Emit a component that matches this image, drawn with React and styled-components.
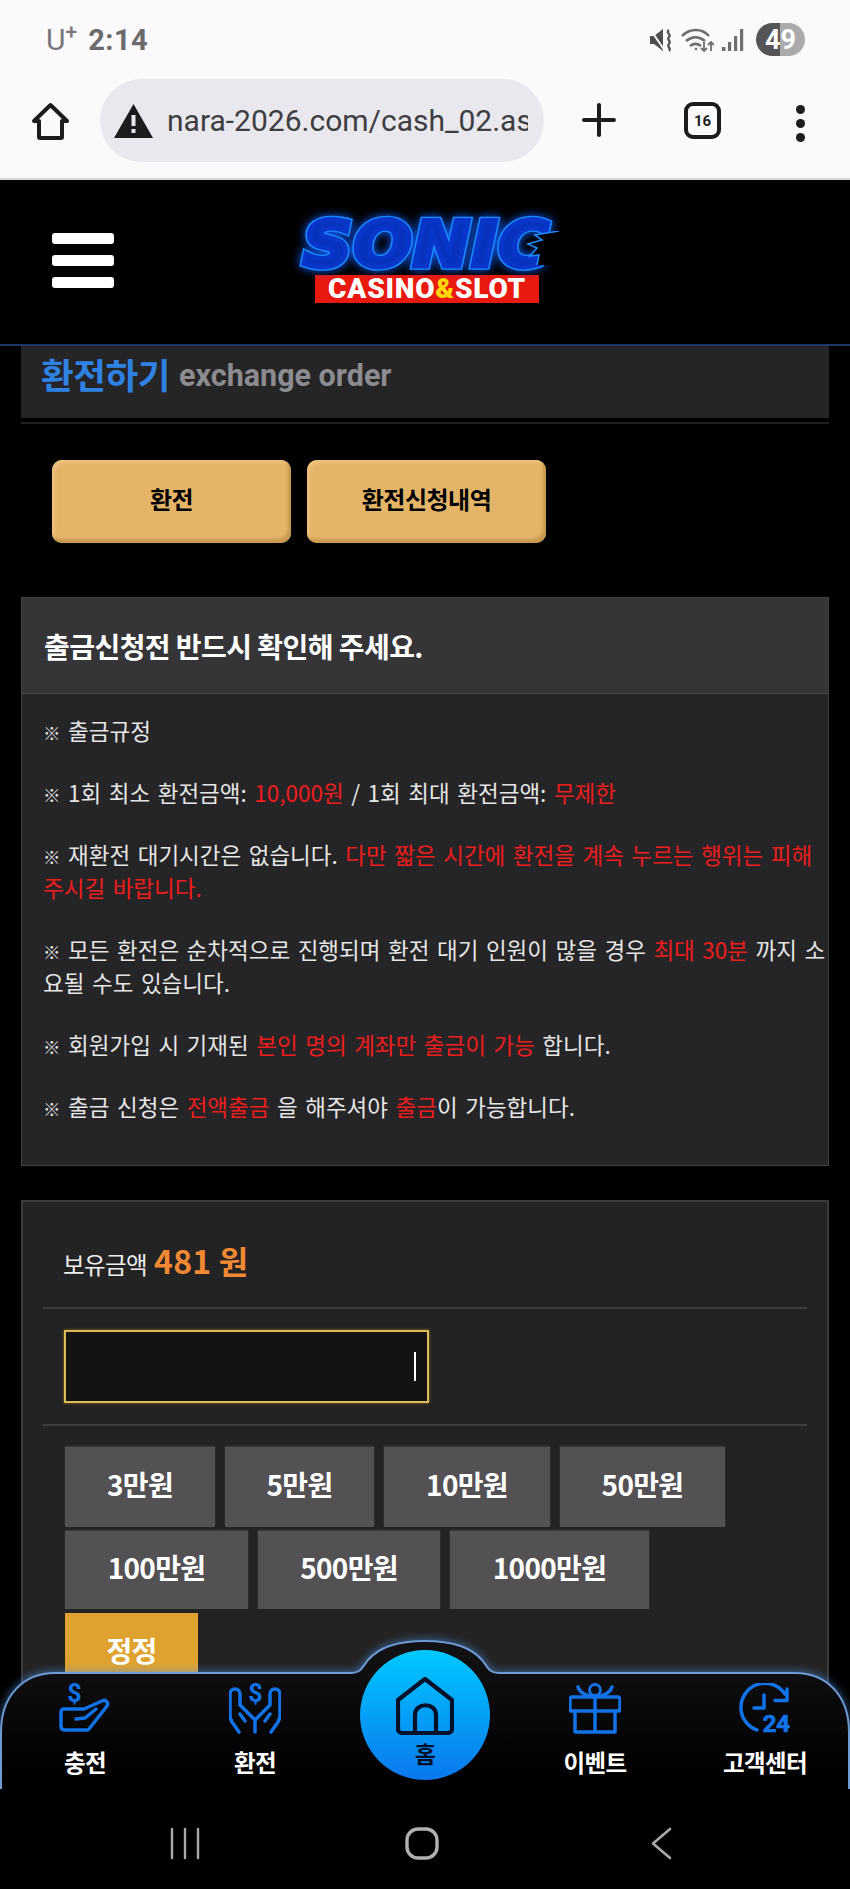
import React from "react";
import styled, { createGlobalStyle } from "styled-components";

const Global = createGlobalStyle`
  html, body { margin: 0; padding: 0; background: #000; }
  * { box-sizing: border-box; }
`;
const KR = `"Noto Sans CJK KR", "Noto Sans", sans-serif`;

const Screen = styled.div`
  width: 850px; height: 1889px; display: flex; flex-direction: column;
  overflow: hidden; background: #000; font-family: ${KR};
`;
const Chrome = styled.div`
  height: 180px; background: #fbf9fc; border-bottom: 2px solid #d8d8da;
  display: flex; flex-direction: column; flex: none;
`;
const StatusBar = styled.div`
  height: 79px; display: flex; align-items: center; justify-content: space-between;
  padding: 0 45px 0 46px; color: #6c6c6e;
`;
const StatusLeft = styled.div`display: flex; align-items: center; gap: 11px;`;
const Carrier = styled.span`
  font: 400 30px "Roboto", sans-serif; color: #77777a; line-height: 1;
  sup { font-size: 21px; font-weight: 500; line-height: 0; vertical-align: 11px; margin-left: 0; }
`;
const Clock = styled.span`font: 700 29px "Roboto", sans-serif; color: #6a6a6c; letter-spacing: .5px;`;
const StatusRight = styled.div`display: flex; align-items: center; gap: 8px;`;
const Battery = styled.div`
  width: 49px; height: 33px; border-radius: 17px; margin-left: 4px;
  background: linear-gradient(90deg, #555557 50%, #ababad 50%);
  display: flex; align-items: center; justify-content: center;
  color: #fff; font: 700 27px "Roboto", sans-serif;
`;
const Toolbar = styled.div`
  height: 99px; display: flex; align-items: flex-start; padding: 0 0 0 32px; color: #1c1c1e;
`;
const ToolIcon = styled.div`
  flex: none; margin-top: ${p => p.$top ?? 23}px; margin-left: ${p => p.$left ?? 0}px;
  display: flex;
`;
const UrlPill = styled.div`
  width: 444px; height: 83px; margin: 0 0 0 31px; border-radius: 42px; background: #e9e8ee;
  display: flex; align-items: center; padding: 0 16px 0 14px; gap: 14px; flex: none;
`;
const UrlText = styled.div`
  font: 400 30px "Roboto", sans-serif; color: #3e3e42; white-space: nowrap; overflow: hidden; flex: 1;
`;
const TabBox = styled.div`
  width: 37px; height: 37px; border: 4px solid #1c1c1e; border-radius: 9px;
  display: flex; align-items: center; justify-content: center;
  font: 700 15px "Roboto", sans-serif; color: #1c1c1e;
`;
const Dots = styled.div`
  display: flex; flex-direction: column; gap: 5px;
  i { width: 9px; height: 9px; border-radius: 50%; background: #1c1c1e; display: block; }
`;

const Site = styled.div`
  flex: 1; position: relative; overflow: hidden; min-height: 0; display: flex; flex-direction: column;
`;
const Header = styled.header`
  height: 166px; flex: none; background: #000; border-bottom: 2px solid #1c3768;
  display: flex; padding: 53px 0 0 52px;
`;
const Burger = styled.div`
  width: 62px; display: flex; flex-direction: column; gap: 11px;
  i { display: block; height: 11px; border-radius: 3px; background: #fff; }
`;
const Logo = styled.div`
  margin: -19px 0 0 178px; width: 270px; display: flex; flex-direction: column; align-items: center;
`;
const SonicRow = styled.div`
  width: 270px; height: 60px; display: flex; align-items: center; justify-content: center; position: relative;
`;
const Sonic = styled.span`
  font: italic 700 58px "DejaVu Sans", sans-serif; line-height: 60px; color: #1b8aff;
  -webkit-text-stroke: 7px #1b8aff; letter-spacing: 1.5px; display: inline-block; position: relative;
  transform: scale(1.17, 1.08);
  filter: drop-shadow(0 0 4px #0a5cff);
  &::after {
    content: attr(data-label); position: absolute; left: 0; top: 0;
    color: #0732bd; -webkit-text-stroke: 4.4px #0836c8;
  }
`;
const Bite = styled.svg`position: absolute; right: 3px; top: 17px;`;
const CasinoBar = styled.div`
  width: 224px; height: 28px; background: #e8190f; color: #fff; margin-top: 1px;
  display: flex; align-items: center; justify-content: center;
  font: 900 28px "Roboto", sans-serif; letter-spacing: .8px; line-height: 1;
  b { color: #ffd60a; font-weight: 900; }
`;

const Content = styled.div`padding: 0 21px; flex: 1;`;
const TitleBar = styled.div`
  height: 72px; background: #252427; display: flex; align-items: center; padding: 0 0 14px 20px; gap: 9px;
  margin-bottom: 4px;
`;
const Title = styled.h1`margin: -3px 0 0; font: 700 35.5px ${KR}; color: #2f82e2; letter-spacing: -.4px;`;
const TitleEn = styled.span`font: 700 30.5px "Roboto", sans-serif; color: #8c8c90;`;
const TitleRule = styled.div`height: 2px; background: #1f1f21;`;
const TabRow = styled.div`display: flex; gap: 16px; padding: 36px 0 0 31px;`;
const GoldBtn = styled.button`
  width: 239px; height: 83px; border: 0; border-radius: 10px; background: #e4b469;
  box-shadow: inset -3px -4px 3px #c89850, inset 3px 3px 3px #edc27c;
  color: #000; font: 700 24px ${KR}; letter-spacing: -.5px; padding: 0 0 6px;
`;
const Notice = styled.section`
  margin-top: 54px; height: 569px; background: #252427; border: 1px solid #414144;
`;
const NoticeHead = styled.div`
  height: 96px; background: #353437; border-bottom: 1px solid #48484b; display: flex; align-items: center;
  padding: 0 0 0 22px; color: #fff; font: 700 28px ${KR}; letter-spacing: -.55px;
`;
const NoticeBody = styled.div`padding: 20px 0 0 21px;`;
const Para = styled.p`
  margin: 0 0 29px; font: 400 22.5px/33px ${KR}; color: #e6e6e6; word-break: break-all; word-spacing: 2.5px;
  span { color: #f01d1d; }
`;
const Mark = styled.i`font-style: normal; font-weight: 700; font-size: 17.5px; line-height: 1;`;
const Form = styled.section`
  margin-top: 34px; height: 600px; background: #232323; border: 2px solid #3b3b3d; padding: 0 20px;
`;
const Balance = styled.div`
  height: 107px; border-bottom: 2px solid #3d3d3f; display: flex; align-items: baseline; padding: 35px 0 0 20px; gap: 7px;
  color: #eee; font: 400 23.5px ${KR}; letter-spacing: -.6px;
  b { font: 700 32px ${KR}; color: #f28a35; letter-spacing: .2px; }
`;
const InputRow = styled.div`
  height: 117px; border-bottom: 2px solid #3d3d3f; padding: 21px 0 0 21px;
`;
const Field = styled.div`
  width: 365px; height: 73px; background: #131314; border: 2px solid #dcbc58;
  box-shadow: 0 0 3px #8a6d20; display: flex; align-items: center; justify-content: flex-end; padding-right: 11px;
  i { display: block; width: 2px; height: 29px; background: #fff; }
`;
const Amounts = styled.div`display: flex; flex-direction: column; gap: 4px; padding: 21px 0 0 22px;`;
const AmountRow = styled.div`display: flex; gap: 10px;`;
const AmountBtn = styled.div`
  width: ${p => p.$w}px; height: ${p => p.$h}px; background: ${p => p.$gold ? "#e0a22e" : "#535154"};
  box-shadow: ${p => p.$gold ? "none" : "0 -1px 2px #444345"};
  color: #fff; display: flex; align-items: center; justify-content: center;
  font: 700 28px ${KR}; letter-spacing: -.7px; padding-bottom: 6px;
`;

const BottomNav = styled.nav`
  position: absolute; left: 0; right: 0; bottom: 0; height: 149px;
  display: grid; grid-template-columns: repeat(5, 170px);
`;
const NavShape = styled.svg`
  position: absolute; left: 0; top: 0; filter: drop-shadow(0 -1px 4px rgba(80,150,240,.55));
`;
const NavItem = styled.div`
  position: relative; display: flex; flex-direction: column; align-items: center; padding-top: 43px;
  color: #fff; font: 700 23.5px ${KR}; letter-spacing: -.6px;
`;
const NavLabel = styled.span`line-height: 32px; margin-top: 11px;`;
const HomeDisc = styled.div`
  position: absolute; left: 20px; top: 10px; width: 130px; height: 130px; border-radius: 50%;
  background: linear-gradient(180deg, #00c8ff 0%, #0a78ee 100%);
  display: flex; flex-direction: column; align-items: center; padding-top: 27px; color: #04112b;
  font: 700 23px ${KR};
  span { line-height: 26px; margin-top: 5px; }
`;
const SysNav = styled.div`
  height: 100px; flex: none; background: #000; padding: 38px 0 0 170px; color: #a9a9ab;
  display: flex; align-items: flex-start;
`;
const SysIcon = styled.svg`margin-left: ${p => p.$left}px; flex: none;`;

const Blue = "#1273e8";
const NavSvg = ({ children }) => (
  <svg width="52" height="52" viewBox="0 0 52 52" fill="none" stroke={Blue} strokeWidth="3.5" strokeLinecap="round" strokeLinejoin="round">{children}</svg>
);
const amounts = [
  { h: 80, items: [[150, "3만원"], [149, "5만원"], [166, "10만원"], [165, "50만원"]] },
  { h: 78, items: [[183, "100만원"], [182, "500만원"], [199, "1000만원"]] },
];

export default function App() {
  return (
    <Screen>
      <Global />
      <Chrome>
        <StatusBar>
          <StatusLeft>
            <Carrier>U<sup>+</sup></Carrier>
            <Clock>2:14</Clock>
          </StatusLeft>
          <StatusRight>
            <svg width="24" height="24" viewBox="0 0 24 24" fill="#4e4e50">
              <path d="M1 8h4l9-7v22l-9-7H1z" />
              <path d="M1 1l15 22" stroke="#fbf9fc" strokeWidth="2" />
              <path d="M20 2c-4 3 3 4 0 7s3 4 0 7 3 4 0 7" fill="none" stroke="#4e4e50" strokeWidth="2.2" />
            </svg>
            <svg width="33" height="24" viewBox="0 0 33 24" fill="none" stroke="#6e6e70" strokeWidth="2.6">
              <path d="M1 8c8-8 20-8 27 0M5 13c6-5 13-5 19 0M9 18c4-3 7-3 11 0" />
              <circle cx="15" cy="21" r="1.3" fill="#6e6e70" stroke="none" />
              <path d="M23 14v9M20 20l3 3 3-3M30 23v-9M27 17l3-3 3 3" strokeWidth="1.8" />
            </svg>
            <svg width="22" height="24" viewBox="0 0 22 24" fill="#6e6e70">
              <rect x="0" y="19" width="3.4" height="4" /><rect x="6" y="14" width="3.2" height="9" />
              <rect x="12" y="8" width="3.2" height="15" /><rect x="18" y="1" width="3.2" height="22" />
            </svg>
            <Battery>49</Battery>
          </StatusRight>
        </StatusBar>
        <Toolbar>
          <ToolIcon>
            <svg width="37" height="38" viewBox="0 0 37 38" fill="none" stroke="#1c1c1e" strokeWidth="4" strokeLinejoin="round">
              <path d="M18.5 3L35 19h-5v16a1 1 0 0 1-1 1H8a1 1 0 0 1-1-1V19H2z" />
            </svg>
          </ToolIcon>
          <UrlPill>
            <svg width="39" height="34" viewBox="0 0 39 34">
              <path d="M19.5 0L39 34H0z" fill="#1c1c1e" />
              <rect x="17.5" y="11" width="4" height="11" fill="#e9e8ee" /><rect x="17.5" y="25" width="4" height="4" fill="#e9e8ee" />
            </svg>
            <UrlText>nara-2026.com/cash_02.asp</UrlText>
          </UrlPill>
          <ToolIcon $left={38} $top={24}>
            <svg width="34" height="34" viewBox="0 0 34 34" stroke="#1c1c1e" strokeWidth="4" strokeLinecap="round"><path d="M2 17h30M17 2v30" /></svg>
          </ToolIcon>
          <ToolIcon $left={68}><TabBox>16</TabBox></ToolIcon>
          <ToolIcon $left={75} $top={26}><Dots><i /><i /><i /></Dots></ToolIcon>
        </Toolbar>
      </Chrome>

      <Site>
        <Header>
          <Burger><i /><i /><i /></Burger>
          <Logo>
            <SonicRow>
              <Sonic data-label="SONIC">SONIC</Sonic>
              <Bite width="34" height="34" viewBox="0 0 34 34" fill="none">
                <path d="M34 0L10 4L17 9L3 13L12 17L5 25L14 24L12 34H34Z" fill="#000" />
                <path d="M34 0L10 4L17 9L3 13L12 17L5 25L14 24L12 34" stroke="#1b8aff" strokeWidth="1.6" />
              </Bite>
            </SonicRow>
            <CasinoBar>CASINO<b>&amp;</b>SLOT</CasinoBar>
          </Logo>
        </Header>
        <Content>
          <TitleBar><Title>환전하기</Title><TitleEn>exchange order</TitleEn></TitleBar>
          <TitleRule />
          <TabRow><GoldBtn>환전</GoldBtn><GoldBtn>환전신청내역</GoldBtn></TabRow>
          <Notice>
            <NoticeHead>출금신청전 반드시 확인해 주세요.</NoticeHead>
            <NoticeBody>
              <Para><Mark>※</Mark> 출금규정</Para>
              <Para><Mark>※</Mark> 1회 최소 환전금액: <span>10,000원</span> / 1회 최대 환전금액: <span>무제한</span></Para>
              <Para><Mark>※</Mark> 재환전 대기시간은 없습니다. <span>다만 짧은 시간에 환전을 계속 누르는 행위는 피해 주시길 바랍니다.</span></Para>
              <Para><Mark>※</Mark> 모든 환전은 순차적으로 진행되며 환전 대기 인원이 많을 경우 <span>최대 30분</span> 까지 소요될 수도 있습니다.</Para>
              <Para><Mark>※</Mark> 회원가입 시 기재된 <span>본인 명의 계좌만 출금이 가능</span> 합니다.</Para>
              <Para><Mark>※</Mark> 출금 신청은 <span>전액출금</span> 을 해주셔야 <span>출금</span>이 가능합니다.</Para>
            </NoticeBody>
          </Notice>
          <Form>
            <Balance>보유금액 <b>481 원</b></Balance>
            <InputRow><Field><i /></Field></InputRow>
            <Amounts>
              {amounts.map((row, i) => (
                <AmountRow key={i}>
                  {row.items.map(([w, t]) => <AmountBtn key={t} $w={w} $h={row.h}>{t}</AmountBtn>)}
                </AmountRow>
              ))}
              <AmountRow><AmountBtn $w={133} $h={79} $gold>정정</AmountBtn></AmountRow>
            </Amounts>
          </Form>
        </Content>
        <BottomNav>
          <NavShape width="850" height="149" viewBox="0 0 850 149">
            <defs>
              <linearGradient id="navFill" x1="0" y1="0" x2="0" y2="1">
                <stop offset="0" stopColor="#131316" /><stop offset=".7" stopColor="#040405" /><stop offset="1" stopColor="#000" />
              </linearGradient>
            </defs>
            <path d="M1 149V92C1 55 24 33 55 33H352C360 33 362 28 368 20C380 6 402 1 425 1C448 1 470 6 482 20C488 28 490 33 498 33H795C826 33 849 55 849 92V149"
              fill="url(#navFill)" stroke="#6d9ad2" strokeWidth="2" />
          </NavShape>
          <NavItem>
            <NavSvg>
              <path d="M5 26H25L43 18C47 16 50 20 48 23L30 46C29.5 47 29 47 28 47H6C3.5 47 2 46 2 43V29C2 27 3.5 26 5 26Z" />
              <path d="M17 36L26 35L37 26" />
              <text x="15" y="19" fontSize="25" fontWeight="700" fontFamily="Roboto" fill={Blue} stroke="none" textAnchor="middle">$</text>
            </NavSvg>
            <NavLabel>충전</NavLabel>
          </NavItem>
          <NavItem>
            <NavSvg>
              <path d="M10 49L3 39C2 37 1 35 1 33V11C1 8 3 6 6 6C9 6 11 8 11 11V22L26 37V49" />
              <path d="M42 49L49 39C50 37 51 35 51 33V11C51 8 49 6 46 6C43 6 41 8 41 11V22L26 37" />
              <path d="M11 31L16 38M41 31L36 38" />
              <text x="26" y="19" fontSize="25" fontWeight="700" fontFamily="Roboto" fill={Blue} stroke="none" textAnchor="middle">$</text>
            </NavSvg>
            <NavLabel>환전</NavLabel>
          </NavItem>
          <NavItem>
            <HomeDisc>
              <svg width="58" height="58" viewBox="0 0 58 58" fill="none" stroke="#04112b" strokeWidth="4.2" strokeLinejoin="round">
                <path d="M29 2L56 23V52A4 4 0 0 1 52 56H6A4 4 0 0 1 2 52V23Z" />
                <path d="M19 56V38C19 25 40 25 40 38V56" />
              </svg>
              <span>홈</span>
            </HomeDisc>
          </NavItem>
          <NavItem>
            <NavSvg>
              <path d="M3 14H49C50 14 51 15 51 16V27C51 28 50 28 49 28H3C2 28 1 28 1 27V16C1 15 2 14 3 14Z" />
              <path d="M6 28V49H46V28M26 14V49" />
              <path d="M9 4C11 10 18 13 26 14C34 13 41 10 43 4" />
              <circle cx="26" cy="7" r="5.5" strokeWidth="2.8" />
            </NavSvg>
            <NavLabel>이벤트</NavLabel>
          </NavItem>
          <NavItem>
            <NavSvg>
              <path d="M46 11A24 24 0 0 0 2 25C2 35 9 44 18 47" />
              <path d="M48 6V17.5H36" />
              <path d="M25 12V25H15" />
              <text x="37" y="49" fontSize="24" fontWeight="700" fontFamily="Roboto" fill={Blue} stroke={Blue} strokeWidth=".6" textAnchor="middle" textLength="27" lengthAdjust="spacingAndGlyphs">24</text>
            </NavSvg>
            <NavLabel>고객센터</NavLabel>
          </NavItem>
        </BottomNav>
      </Site>

      <SysNav>
        <SysIcon $left={0} width="30" height="33" viewBox="0 0 30 33" stroke="#a9a9ab" strokeWidth="2.4" strokeLinecap="round"><path d="M2 2v29M15 2v29M28 2v29" /></SysIcon>
        <SysIcon $left={205} width="34" height="33" viewBox="0 0 34 33" fill="none" stroke="#b0b0b2" strokeWidth="3.4"><rect x="2" y="2" width="30" height="29" rx="11" /></SysIcon>
        <SysIcon $left={211} width="22" height="33" viewBox="0 0 22 33" fill="none" stroke="#a9a9ab" strokeWidth="2.6" strokeLinecap="round" strokeLinejoin="round"><path d="M20 2L3 16.5 20 31" /></SysIcon>
      </SysNav>
    </Screen>
  );
}
